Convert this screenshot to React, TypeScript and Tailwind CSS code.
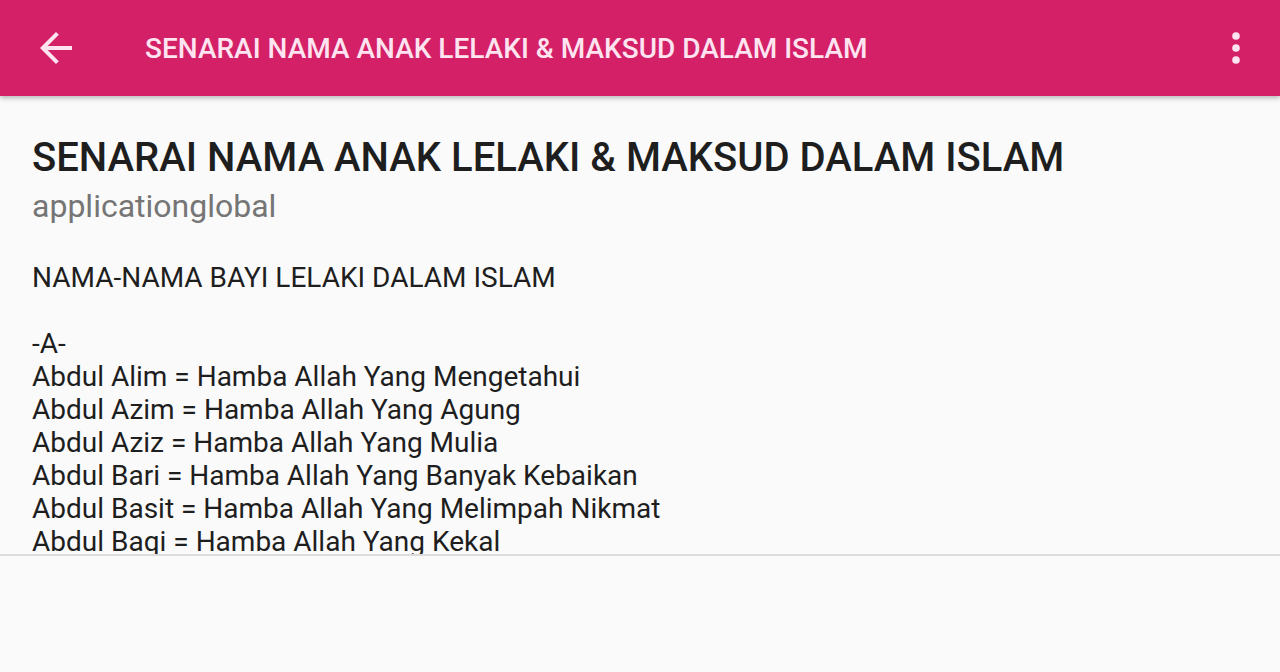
import React from "react";

const lines = [
  "NAMA-NAMA BAYI LELAKI DALAM ISLAM",
  "\u00a0",
  "-A-",
  "Abdul Alim = Hamba Allah Yang Mengetahui",
  "Abdul Azim = Hamba Allah Yang Agung",
  "Abdul Aziz = Hamba Allah Yang Mulia",
  "Abdul Bari = Hamba Allah Yang Banyak Kebaikan",
  "Abdul Basit = Hamba Allah Yang Melimpah Nikmat",
  "Abdul Baqi = Hamba Allah Yang Kekal",
];

export default function App() {
  return (
    <div
      className="w-[1280px] h-[672px] bg-[#fafafa] flex flex-col overflow-hidden"
      style={{ fontFamily: "Roboto, 'Noto Sans', sans-serif" }}
    >
      <header className="relative z-10 h-[96px] shrink-0 bg-[#d42067] flex items-center shadow-[0_2px_5px_rgba(0,0,0,0.28)]">
        <div className="w-[48px] h-[48px] ml-[32px] flex items-center justify-center">
          <svg viewBox="0 0 24 24" width="48" height="48" fill="#fde4f0">
            <path d="M20 11H7.83l5.59-5.59L12 4l-8 8 8 8 1.41-1.41L7.83 13H20v-2z" />
          </svg>
        </div>
        <div className="ml-[65px] mt-[2px] text-[28px] leading-[32px] font-medium text-[#fde4f0] flex-1">
          SENARAI NAMA ANAK LELAKI &amp; MAKSUD DALAM ISLAM
        </div>
        <div className="w-[48px] h-[48px] mr-[20px] flex items-center justify-center">
          <svg viewBox="0 0 24 24" width="48" height="48" fill="#fde4f0">
            <circle cx="12" cy="6" r="1.9" />
            <circle cx="12" cy="12" r="1.9" />
            <circle cx="12" cy="18" r="1.9" />
          </svg>
        </div>
      </header>
      <main className="h-[460px] shrink-0 overflow-hidden border-b-2 border-[#dcdcdc] px-[32px] pt-[38px]">
        <h1 className="text-[40px] leading-[48px] font-medium text-[#1e1e1e]">
          SENARAI NAMA ANAK LELAKI &amp; MAKSUD DALAM ISLAM
        </h1>
        <div className="mt-[6px] text-[32px] leading-[36px] text-[#757575]">applicationglobal</div>
        <div className="mt-[37px] text-[28px] leading-[33px] text-[#1e1e1e]">
          {lines.map((l, i) => (
            <div key={i}>{l}</div>
          ))}
        </div>
      </main>
      <div className="flex-1 bg-[#fafafa]" />
    </div>
  );
}
